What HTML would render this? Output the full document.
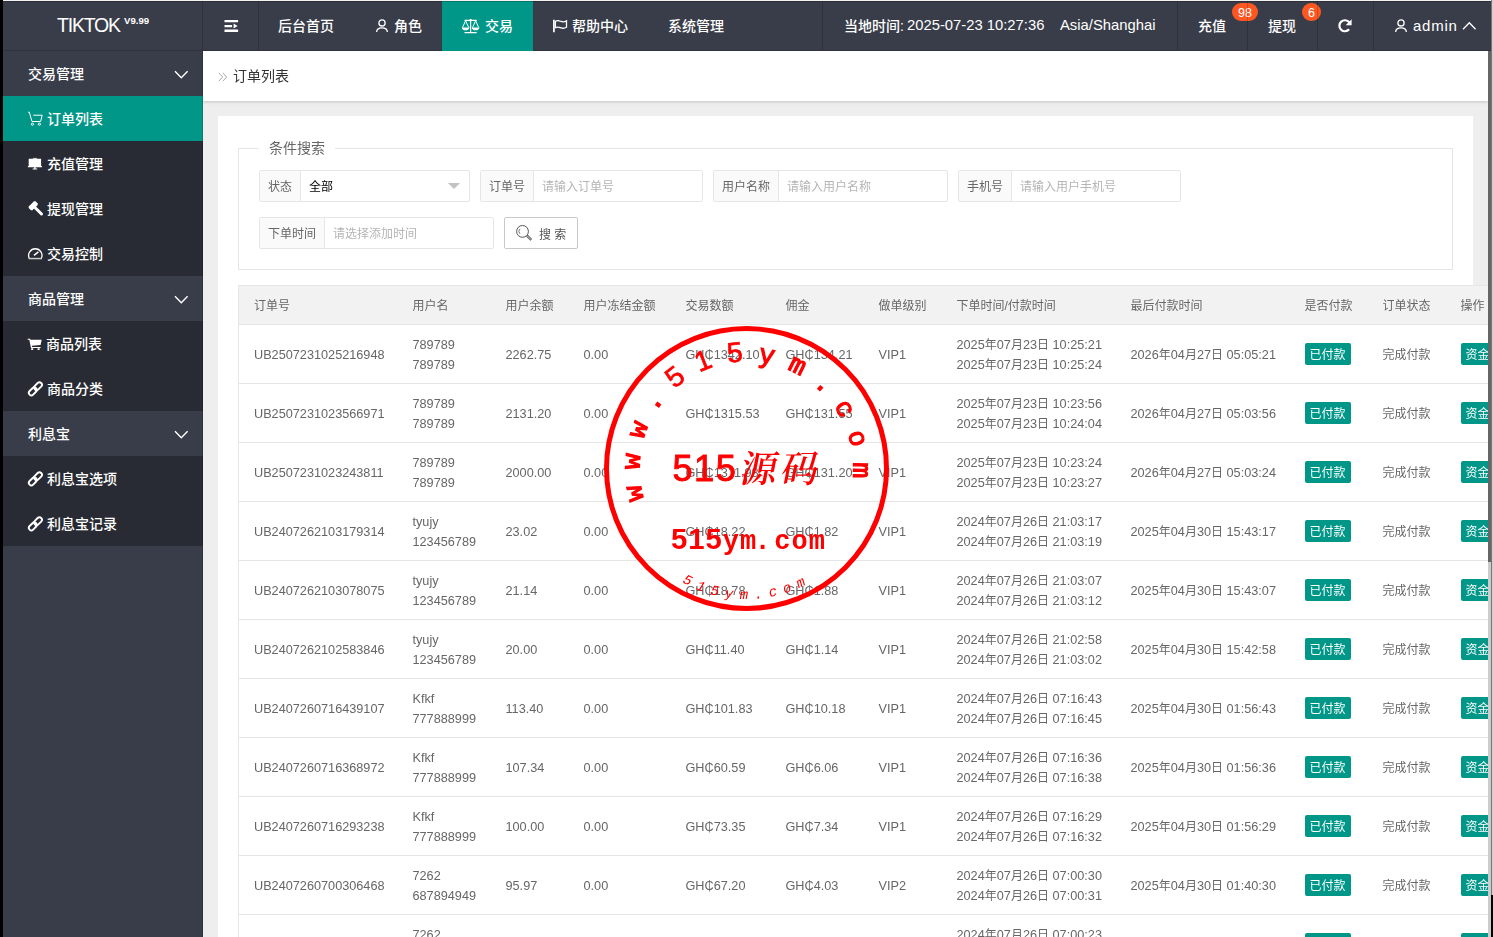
<!DOCTYPE html>
<html lang="zh-CN">
<head>
<meta charset="utf-8">
<title>订单列表</title>
<style>
*{box-sizing:border-box;margin:0;padding:0}
html,body{width:1493px;height:937px;overflow:hidden;background:#fff}
body{position:relative;font-family:"Liberation Sans","Noto Sans CJK SC",sans-serif;font-size:14px;color:#333;-webkit-font-smoothing:antialiased}
i{font-style:normal}
.edge-l{position:absolute;left:0;top:0;width:3px;height:937px;background:#000}
.edge-t{position:absolute;left:3px;top:0;width:1488px;height:1px;background:#f3f4f1}
.edge-r{position:absolute;left:1491px;top:0;width:2px;height:895px;background:linear-gradient(90deg,#777 50%,#d0d0d0 50%)}
.edge-rb{position:absolute;left:1491px;top:895px;width:2px;height:42px;background:#000}
#app{position:absolute;left:3px;top:1px;width:1488px;height:936px;overflow:hidden;background:#eee}
/* header */
.hd{position:absolute;left:0;top:0;width:1488px;height:50px;background:#393d49;color:#fff;border-bottom:1px solid #2f3340}
.logo{position:absolute;left:0;top:0;width:200px;height:49px}
.logo b{position:absolute;left:54px;top:12px;font-weight:normal;font-size:19.5px;line-height:24px;letter-spacing:-1.2px;white-space:nowrap}
.logo sup{position:absolute;left:121px;top:14px;font-size:9.6px;line-height:12px;font-weight:bold;letter-spacing:0}
.nav{position:absolute;top:0;height:49px;line-height:49px;font-size:14px;white-space:nowrap}
.nav.on{background:#009688}
.hd .ic{position:absolute}
.nt{position:absolute;top:1px;height:49px;line-height:49px;font-size:14px;white-space:nowrap;color:#fff;font-weight:500}
.nt.la{font-size:14.8px;top:0;font-weight:400}
.vl{position:absolute;top:0;width:1px;height:49px;background:rgba(0,0,0,.17)}
.badge{position:absolute;top:2px;height:18px;line-height:20px;border-radius:9px;background:#ff5722;color:#fff;font-size:12.5px;text-align:center}
/* sidebar */
.sd{position:absolute;left:0;top:50px;width:200px;height:886px;background:#393d49;color:#fff}
.sd .g,.sd .it{position:absolute;left:0;width:200px;height:45px;line-height:45px;font-size:14px;white-space:nowrap;font-weight:500}
.sd .it{background:#282b33}
.sd .it.on{background:#009688}
.sd .g span{position:absolute;left:25px}
.sd .it span{position:absolute;left:44px}
.sd svg{position:absolute}
.sd span{top:1px}
.svl{position:absolute;left:199px;top:0;width:1px;height:886px;background:rgba(0,0,0,.17)}
/* body */
.bd{position:absolute;left:200px;top:50px;width:1285px;height:886px;background:#eee;overflow:hidden}
.tt{will-change:transform;position:absolute;left:0;top:0;width:1285px;height:50px;background:#fff;box-shadow:0 1px 3px rgba(0,0,0,.18);line-height:50px;font-size:14px;color:#333}
.tt em{position:absolute;left:15px;font-style:normal;color:#999;font-size:14px}
.tt span{position:absolute;left:30px}
.card{will-change:transform;position:absolute;left:15px;top:65px;width:1255px;height:900px;background:#fff}
.fs{position:absolute;left:20px;top:32px;width:1215px;height:122px;border:1px solid #e6e6e6}
.lg{position:absolute;left:20px;top:-12px;height:22px;line-height:22px;padding:0 10px;background:#fff;font-size:14px;color:#666}
.fi{position:absolute;height:32px;border:1px solid #e6e6e6;border-radius:2px;background:#fff;font-size:12px;line-height:30px;white-space:nowrap}
.fi label{position:absolute;left:0;top:0;height:30px;line-height:32px;background:#fafafa;border-right:1px solid #e6e6e6;color:#666;text-align:center}
.fi .ph{position:absolute;top:1px;color:#b5b5b5}
.fi .val{position:absolute;top:1px;color:#000}
.btn{position:absolute;height:32px;border:1px solid #c9c9c9;border-radius:2px;background:#fff;font-size:12px;line-height:30px;color:#333}
table{position:absolute;left:20px;top:169px;border-collapse:collapse;table-layout:fixed;font-size:12px;color:#666;background:#fff;width:1300px}
th,td{border:1px solid #e6e6e6;border-left:none;border-right:none;padding:0 15px;text-align:left;font-weight:normal;white-space:nowrap;overflow:visible}
th{height:39px;background:#f2f2f2;line-height:20px;padding-top:2px}
td{height:59px;line-height:20px;font-size:12.7px;padding-top:2px}
td i,td.c{font-size:12px}
table{border-left:1px solid #e6e6e6}
.tag{display:inline-block;height:22px;line-height:24px;overflow:hidden;padding:0 5px;background:#009688;color:#fff;border-radius:2px;font-size:12px;vertical-align:middle;position:relative;top:-1px}
.sb1{position:absolute;left:1485px;top:50px;width:3px;height:511px;background:#666}
.sb2{position:absolute;left:1485px;top:561px;width:3px;height:375px;background:#ccc}
.seal{position:absolute}
</style>
</head>
<body>
<div class="edge-l"></div><div class="edge-t"></div><div class="edge-r"></div><div class="edge-rb"></div>
<div id="app">
 <div class="sd">
  <div class="g" style="top:0"><span>交易管理</span><svg style="left:171px;top:19px" width="15" height="10" viewBox="0 0 15 10"><path d="M1 1.200L7.300 7.700L13.600 1.200" fill="none" stroke="#fff" stroke-width="1.400"/></svg></div>
  <div class="it on" style="top:45px"><svg style="left:24px;top:15px" width="17" height="16" viewBox="0 0 17 16"><g fill="none" stroke="#fff" stroke-width="1"><path d="M1 1.200h1.300l2.700 9.300h8.600l1.600-6.300H6.300"/><circle cx="5.400" cy="13.200" r="1.100"/><circle cx="12.400" cy="13.200" r="1.100"/></g></svg><span>订单列表</span></div>
  <div class="it" style="top:90px"><svg style="left:24px;top:16px" width="17" height="14" viewBox="0 0 17 14"><path d="M1.700 1.700h12.400v8.300H1.700zM0.900 9h14v1.200H0.900zM7.200 10h1.400v1.500H7.200zM5.600 11.500h4.600v1H5.600z" fill="#fff"/><path d="M5.900 0.900h4v1h-4z" fill="#ddd"/></svg><span>充值管理</span></div>
  <div class="it" style="top:135px"><svg style="left:24px;top:14px" width="17" height="17" viewBox="0 0 17 17"><g fill="none" stroke="#fff"><path d="M3.300 8.600L9.100 2.800" stroke-width="5.200"/><path d="M1.900 7.200L4.700 10M7.700 1.400l2.800 2.800" stroke-width="1.400"/><path d="M8.200 7.700l6.300 6.300" stroke-width="3" stroke-linecap="round"/></g></svg><span>提现管理</span></div>
  <div class="it" style="top:180px"><svg style="left:24px;top:15px" width="17" height="15" viewBox="0 0 17 15"><g fill="none" stroke="#fff"><path d="M2.200 12.200A6.700 6.700 0 1 1 14.400 12.200" stroke-width="1.300"/><path d="M7 9.300l4.400-3.500" stroke-width="1.600"/></g><path d="M1.600 11.800h13.400v1.500H1.600z" fill="#ccc"/></svg><span>交易控制</span></div>
  <div class="g" style="top:225px"><span>商品管理</span><svg style="left:171px;top:19px" width="15" height="10" viewBox="0 0 15 10"><path d="M1 1.200L7.300 7.700L13.600 1.200" fill="none" stroke="#fff" stroke-width="1.400"/></svg></div>
  <div class="it" style="top:270px"><svg style="left:24px;top:17px" width="15.700" height="12" viewBox="0 0 17 13"><path d="M0.700 0.800h2.600l0.500 1h12.100l-1.200 5.700L5.200 8.400l0.300 1.300h9.200v1.200H4.300L2.500 2H0.700zM4.500 11h2.200v2H4.500zM11.500 11h2.200v2h-2.200z" fill="#fff"/></svg><span style="left:43px">商品列表</span></div>
  <div class="it" style="top:315px"><svg style="left:24px;top:14px" width="17" height="17" viewBox="0 0 17 17"><g fill="none" stroke="#fff" stroke-width="1.900"><rect x="-4.500" y="-2.500" width="9" height="5" rx="2.500" transform="translate(5.800 11.400) rotate(-45)"/><rect x="-4.500" y="-2.500" width="9" height="5" rx="2.500" transform="translate(11 6.200) rotate(-45)"/></g></svg><span>商品分类</span></div>
  <div class="g" style="top:360px"><span>利息宝</span><svg style="left:171px;top:19px" width="15" height="10" viewBox="0 0 15 10"><path d="M1 1.200L7.300 7.700L13.600 1.200" fill="none" stroke="#fff" stroke-width="1.400"/></svg></div>
  <div class="it" style="top:405px"><svg style="left:24px;top:14px" width="17" height="17" viewBox="0 0 17 17"><g fill="none" stroke="#fff" stroke-width="1.900"><rect x="-4.500" y="-2.500" width="9" height="5" rx="2.500" transform="translate(5.800 11.400) rotate(-45)"/><rect x="-4.500" y="-2.500" width="9" height="5" rx="2.500" transform="translate(11 6.200) rotate(-45)"/></g></svg><span>利息宝选项</span></div>
  <div class="it" style="top:450px"><svg style="left:24px;top:14px" width="17" height="17" viewBox="0 0 17 17"><g fill="none" stroke="#fff" stroke-width="1.900"><rect x="-4.500" y="-2.500" width="9" height="5" rx="2.500" transform="translate(5.800 11.400) rotate(-45)"/><rect x="-4.500" y="-2.500" width="9" height="5" rx="2.500" transform="translate(11 6.200) rotate(-45)"/></g></svg><span>利息宝记录</span></div>
  <div class="svl"></div>
 </div>
 <div class="bd">
  <div class="card">
   <div class="fs">
    <div class="lg">条件搜索</div>
    <div class="fi" style="left:20px;top:21px;width:211px"><label style="width:41px">状态</label><span class="val" style="left:49px">全部</span><i style="position:absolute;left:188px;top:12px;border:6px solid transparent;border-top-color:#c2c2c2;border-bottom:none"></i></div>
    <div class="fi" style="left:241px;top:21px;width:223px"><label style="width:53px">订单号</label><span class="ph" style="left:61px">请输入订单号</span></div>
    <div class="fi" style="left:474px;top:21px;width:235px"><label style="width:65px">用户名称</label><span class="ph" style="left:73px">请输入用户名称</span></div>
    <div class="fi" style="left:719px;top:21px;width:223px"><label style="width:53px">手机号</label><span class="ph" style="left:61px">请输入用户手机号</span></div>
    <div class="fi" style="left:20px;top:68px;width:235px"><label style="width:65px">下单时间</label><span class="ph" style="left:73px">请选择添加时间</span></div>
    <div class="btn" style="left:265px;top:68px;width:74px"><svg style="position:absolute;left:10px;top:6px" width="18" height="18" viewBox="0 0 18 18"><g fill="none" stroke="#555" stroke-width="1"><circle cx="7.500" cy="7.400" r="5.900"/><path d="M5 4.800a3.500 3.500 0 0 0 0 5" stroke-width="0.800"/><path d="M12 11.600l4.300 4.300" stroke-width="2.400"/><path d="M12.300 11.900l3.700 3.700" stroke="#fff" stroke-width="0.800"/></g></svg><span style="position:absolute;left:34px;top:2px;color:#555">搜 索</span></div>
   </div>
   <table>
    <colgroup><col style="width:159px"><col style="width:93px"><col style="width:78px"><col style="width:102px"><col style="width:100px"><col style="width:93px"><col style="width:78px"><col style="width:174px"><col style="width:174px"><col style="width:78px"><col style="width:78px"><col style="width:93px"></colgroup>
    <thead><tr><th>订单号</th><th>用户名</th><th>用户余额</th><th>用户冻结金额</th><th>交易数额</th><th>佣金</th><th>做单级别</th><th>下单时间/付款时间</th><th>最后付款时间</th><th>是否付款</th><th>订单状态</th><th>操作</th></tr></thead>
    <tbody>
<tr><td>UB2507231025216948</td><td>789789<br>789789</td><td>2262.75</td><td>0.00</td><td>GH₵1342.10</td><td>GH₵134.21</td><td>VIP1</td><td class="dt">2025<i>年</i>07<i>月</i>23<i>日</i> 10:25:21<br>2025<i>年</i>07<i>月</i>23<i>日</i> 10:25:24</td><td class="dt">2026<i>年</i>04<i>月</i>27<i>日</i> 05:05:21</td><td><span class="tag">已付款</span></td><td class="c">完成付款</td><td><span class="tag">资金流水</span></td></tr>
<tr><td>UB2507231023566971</td><td>789789<br>789789</td><td>2131.20</td><td>0.00</td><td>GH₵1315.53</td><td>GH₵131.55</td><td>VIP1</td><td class="dt">2025<i>年</i>07<i>月</i>23<i>日</i> 10:23:56<br>2025<i>年</i>07<i>月</i>23<i>日</i> 10:24:04</td><td class="dt">2026<i>年</i>04<i>月</i>27<i>日</i> 05:03:56</td><td><span class="tag">已付款</span></td><td class="c">完成付款</td><td><span class="tag">资金流水</span></td></tr>
<tr><td>UB2507231023243811</td><td>789789<br>789789</td><td>2000.00</td><td>0.00</td><td>GH₵1311.98</td><td>GH₵131.20</td><td>VIP1</td><td class="dt">2025<i>年</i>07<i>月</i>23<i>日</i> 10:23:24<br>2025<i>年</i>07<i>月</i>23<i>日</i> 10:23:27</td><td class="dt">2026<i>年</i>04<i>月</i>27<i>日</i> 05:03:24</td><td><span class="tag">已付款</span></td><td class="c">完成付款</td><td><span class="tag">资金流水</span></td></tr>
<tr><td>UB2407262103179314</td><td>tyujy<br>123456789</td><td>23.02</td><td>0.00</td><td>GH₵18.22</td><td>GH₵1.82</td><td>VIP1</td><td class="dt">2024<i>年</i>07<i>月</i>26<i>日</i> 21:03:17<br>2024<i>年</i>07<i>月</i>26<i>日</i> 21:03:19</td><td class="dt">2025<i>年</i>04<i>月</i>30<i>日</i> 15:43:17</td><td><span class="tag">已付款</span></td><td class="c">完成付款</td><td><span class="tag">资金流水</span></td></tr>
<tr><td>UB2407262103078075</td><td>tyujy<br>123456789</td><td>21.14</td><td>0.00</td><td>GH₵18.78</td><td>GH₵1.88</td><td>VIP1</td><td class="dt">2024<i>年</i>07<i>月</i>26<i>日</i> 21:03:07<br>2024<i>年</i>07<i>月</i>26<i>日</i> 21:03:12</td><td class="dt">2025<i>年</i>04<i>月</i>30<i>日</i> 15:43:07</td><td><span class="tag">已付款</span></td><td class="c">完成付款</td><td><span class="tag">资金流水</span></td></tr>
<tr><td>UB2407262102583846</td><td>tyujy<br>123456789</td><td>20.00</td><td>0.00</td><td>GH₵11.40</td><td>GH₵1.14</td><td>VIP1</td><td class="dt">2024<i>年</i>07<i>月</i>26<i>日</i> 21:02:58<br>2024<i>年</i>07<i>月</i>26<i>日</i> 21:03:02</td><td class="dt">2025<i>年</i>04<i>月</i>30<i>日</i> 15:42:58</td><td><span class="tag">已付款</span></td><td class="c">完成付款</td><td><span class="tag">资金流水</span></td></tr>
<tr><td>UB2407260716439107</td><td>Kfkf<br>777888999</td><td>113.40</td><td>0.00</td><td>GH₵101.83</td><td>GH₵10.18</td><td>VIP1</td><td class="dt">2024<i>年</i>07<i>月</i>26<i>日</i> 07:16:43<br>2024<i>年</i>07<i>月</i>26<i>日</i> 07:16:45</td><td class="dt">2025<i>年</i>04<i>月</i>30<i>日</i> 01:56:43</td><td><span class="tag">已付款</span></td><td class="c">完成付款</td><td><span class="tag">资金流水</span></td></tr>
<tr><td>UB2407260716368972</td><td>Kfkf<br>777888999</td><td>107.34</td><td>0.00</td><td>GH₵60.59</td><td>GH₵6.06</td><td>VIP1</td><td class="dt">2024<i>年</i>07<i>月</i>26<i>日</i> 07:16:36<br>2024<i>年</i>07<i>月</i>26<i>日</i> 07:16:38</td><td class="dt">2025<i>年</i>04<i>月</i>30<i>日</i> 01:56:36</td><td><span class="tag">已付款</span></td><td class="c">完成付款</td><td><span class="tag">资金流水</span></td></tr>
<tr><td>UB2407260716293238</td><td>Kfkf<br>777888999</td><td>100.00</td><td>0.00</td><td>GH₵73.35</td><td>GH₵7.34</td><td>VIP1</td><td class="dt">2024<i>年</i>07<i>月</i>26<i>日</i> 07:16:29<br>2024<i>年</i>07<i>月</i>26<i>日</i> 07:16:32</td><td class="dt">2025<i>年</i>04<i>月</i>30<i>日</i> 01:56:29</td><td><span class="tag">已付款</span></td><td class="c">完成付款</td><td><span class="tag">资金流水</span></td></tr>
<tr><td>UB2407260700306468</td><td>7262<br>687894949</td><td>95.97</td><td>0.00</td><td>GH₵67.20</td><td>GH₵4.03</td><td>VIP2</td><td class="dt">2024<i>年</i>07<i>月</i>26<i>日</i> 07:00:30<br>2024<i>年</i>07<i>月</i>26<i>日</i> 07:00:31</td><td class="dt">2025<i>年</i>04<i>月</i>30<i>日</i> 01:40:30</td><td><span class="tag">已付款</span></td><td class="c">完成付款</td><td><span class="tag">资金流水</span></td></tr>
<tr><td>UB2407260700232145</td><td>7262<br>687894949</td><td>91.94</td><td>0.00</td><td>GH₵64.38</td><td>GH₵3.86</td><td>VIP2</td><td class="dt">2024<i>年</i>07<i>月</i>26<i>日</i> 07:00:23<br>2024<i>年</i>07<i>月</i>26<i>日</i> 07:00:25</td><td class="dt">2025<i>年</i>04<i>月</i>30<i>日</i> 01:40:23</td><td><span class="tag">已付款</span></td><td class="c">完成付款</td><td><span class="tag">资金流水</span></td></tr>
    </tbody>
   </table>
  </div>
  <div class="tt"><svg style="position:absolute;left:15px;top:21px" width="10" height="10" viewBox="0 0 10 10"><path d="M0.800 0.800L4.600 5L0.800 9.200M4.800 0.800L8.600 5L4.800 9.200" fill="none" stroke="#aaa" stroke-width="1"/></svg><span>订单列表</span></div>
 </div>
 <div class="hd">
  <div style="position:absolute;left:0;top:0;width:1488px;height:1px;background:rgba(0,0,0,.22);z-index:3"></div>
  <div class="logo"><b>TIKTOK</b><sup>V9.99</sup></div>
  <div class="nav on" style="left:439px;width:91px;height:50px"></div>
  <div class="vl" style="left:199px"></div><div class="vl" style="left:255px"></div><div class="vl" style="left:819px"></div>
  <svg class="ic" style="left:221px;top:18px" width="15" height="14" viewBox="0 0 15 14"><path d="M0.5 1h13.6v2.3H0.5zM0.5 5.9h7.6v2.3H0.5zM0.5 10.6h13.6v2.3H0.5zM9.6 4.6l4 2.4-4 2.4z" fill="#fff"/></svg>
  <span class="nt" style="left:275px">后台首页</span>
  <svg class="ic" style="left:372px;top:17px" width="14" height="15" viewBox="0 0 14 15"><circle cx="7" cy="4.900" r="3.100" fill="none" stroke="#fff" stroke-width="1.300"/><path d="M1.650 14.100c0-2.900 2.200-4.300 5.350-4.300s5.350 1.400 5.350 4.300" fill="none" stroke="#fff" stroke-width="1.300"/></svg>
  <span class="nt" style="left:391px">角色</span>
  <svg class="ic" style="left:458px;top:17px" width="20" height="16" viewBox="0 0 20 16"><g fill="none" stroke="#fff" stroke-width="1.2"><path d="M9.600 1v13.500M3.500 2.400h12.200M3.500 14.600h12.200"/><path d="M1.500 9.500L4.600 2.800L7.700 9.500M11.500 9.500L14.600 2.800L17.700 9.500" stroke-width="1"/></g><path d="M0.800 9.400h7.600c0 1.800-1.700 2.900-3.800 2.900s-3.800-1.100-3.800-2.900zM10.800 9.400h7.600c0 1.800-1.700 2.900-3.800 2.900s-3.800-1.100-3.800-2.900z" fill="#fff"/><circle cx="9.600" cy="2.300" r="1.300" fill="#fff"/></svg>
  <span class="nt" style="left:482px">交易</span>
  <svg class="ic" style="left:549px;top:17px" width="17" height="15" viewBox="0 0 17 15"><path d="M1.900 1.700v12.500" fill="none" stroke="#fff" stroke-width="1.700"/><path d="M3.400 3.300c2.200-1.300 3.600-0.600 5.500 0.100c1.800 0.700 3.300 0.800 5.600-0.500v6.400c-2.300 1.300-3.800 1.200-5.600 0.500c-1.900-0.700-3.300-1.400-5.500-0.100z" fill="none" stroke="#fff" stroke-width="1.300"/></svg>
  <span class="nt" style="left:569px">帮助中心</span>
  <span class="nt" style="left:665px">系统管理</span>
  <span class="nt" style="left:841px">当地时间:</span><span class="nt la" style="left:904px">2025-07-23 10:27:36</span><span class="nt la" style="left:1057px">Asia/Shanghai</span>
  <span class="nt" style="left:1195px">充值</span>
  <span class="nt" style="left:1265px">提现</span>
  <div class="badge" style="left:1229px;width:26px">98</div>
  <div class="badge" style="left:1299px;width:19px">6</div>
  <div class="vl" style="left:1174px"></div><div class="vl" style="left:1244px"></div><div class="vl" style="left:1314px"></div><div class="vl" style="left:1370px"></div>
  <svg class="ic" style="left:1334px;top:17px" width="16" height="16" viewBox="0 0 16 16"><path d="M12.100 11.300A5.500 5.500 0 1 1 12.200 4.300" fill="none" stroke="#fff" stroke-width="2.200"/><path d="M14.600 1.200v6h-6z" fill="#fff"/></svg>
  <svg class="ic" style="left:1391px;top:17px" width="14" height="15" viewBox="0 0 14 15"><circle cx="7" cy="4.900" r="3.100" fill="none" stroke="#fff" stroke-width="1.300"/><path d="M1.650 14.100c0-2.900 2.200-4.300 5.350-4.300s5.350 1.400 5.350 4.300" fill="none" stroke="#fff" stroke-width="1.300"/></svg>
  <span class="nt" style="left:1410px;top:0;font-size:15px;letter-spacing:0.75px">admin</span>
  <svg class="ic" style="left:1459px;top:20px" width="15" height="10" viewBox="0 0 15 10"><path d="M1 8.300L7.300 1.800L13.600 8.300" fill="none" stroke="#fff" stroke-width="1.300"/></svg>
 </div>
 <div class="sb1"></div><div class="sb2"></div>
 <svg class="seal" style="left:593px;top:317px" width="300" height="300" viewBox="0 0 300 300">
<circle cx="150.5" cy="150.5" r="140" fill="none" stroke="#f00" stroke-width="5"/>
<defs><path id="arcT" d="M50.31 188.06 A107.0 107.0 0 1 1 256.17 167.33"/>
<path id="arcB" d="M83.27 262.35 A130.5 130.5 0 0 0 212.79 265.17"/></defs>
<text font-family="Liberation Mono, monospace" fill="#f00" stroke="#f00" stroke-width="0.7"><textPath href="#arcT"><tspan font-size="26.5" stroke-width="1.2" x="7.08 37.15 67.22 97.28">www.</tspan><tspan font-family="Liberation Sans, sans-serif" font-size="28.0" x="127.51 157.58 187.65">515</tspan><tspan font-size="26.5" stroke-width="1.2" x="217.55 247.62 277.68 307.75 337.82 367.88">ym.com</tspan></textPath></text>
<text font-family="Liberation Mono, monospace" font-style="italic" font-size="14.0" fill="#f00" letter-spacing="6.68"><textPath href="#arcB" startOffset="3.34">515ym.com</textPath></text>
<text font-family="Liberation Sans, sans-serif" font-size="36.3" fill="#f00" stroke="#f00" stroke-width="0.9" x="76.51" dx="0.00 1.41 1.51" y="162.7">515</text>
<text font-family="Noto Serif CJK SC, serif" font-weight="600" font-size="37" fill="#f00" text-anchor="middle" transform="translate(184.8 150.6) skewX(-11) translate(-184.8 -150.6)" x="163.6 204.6" y="164.2">源码</text>
<text font-family="Liberation Mono, monospace" font-weight="bold" fill="#f00" y="230.8"><tspan font-family="Liberation Sans, sans-serif" font-size="29.3" x="75.05" dx="0.00 0.90 0.90">515</tspan><tspan font-size="27" text-anchor="middle" x="134.8 152.0 166.5 186.4 203.6 220.8">ym.com</tspan></text>
</svg>
</div>
</body>
</html>
